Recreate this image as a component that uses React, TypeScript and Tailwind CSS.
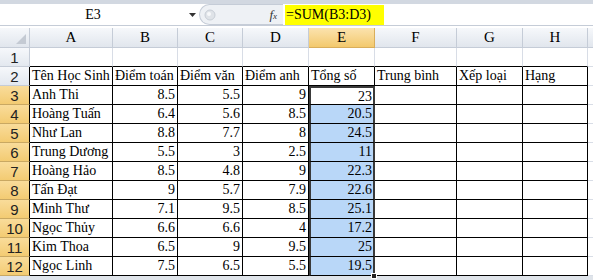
import React from "react";

const cols = ["A", "B", "C", "D", "E", "F", "G", "H"];

const rows: (string | number)[][] = [
  ["Anh Thi", 8.5, 5.5, 9, 23],
  ["Hoàng Tuấn", 6.4, 5.6, 8.5, 20.5],
  ["Như Lan", 8.8, 7.7, 8, 24.5],
  ["Trung Dương", 5.5, 3, 2.5, 11],
  ["Hoàng Hảo", 8.5, 4.8, 9, 22.3],
  ["Tấn Đạt", 9, 5.7, 7.9, 22.6],
  ["Minh Thư", 7.1, 9.5, 8.5, 25.1],
  ["Ngọc Thủy", 6.6, 6.6, 4, 17.2],
  ["Kim Thoa", 6.5, 9, 9.5, 25],
  ["Ngọc Linh", 7.5, 6.5, 5.5, 19.5],
];

const headers = ["Tên Học Sinh", "Điểm toán", "Điểm văn", "Điểm anh", "Tổng số", "Trung bình", "Xếp loại", "Hạng"];

const grid =
  "grid grid-cols-[30px_83px_65px_65px_66px_66px_82px_66px_65px_1fr]";

function RowHead({ n, selected }: { n: number; selected?: boolean }) {
  return (
    <div
      className={`h-[19px] border-r border-b flex items-center justify-center text-[15px] leading-none text-[#222] ${
        selected
          ? "bg-gradient-to-b from-[#f9dc9a] to-[#f3cb72] border-r-[#000] border-b-[#c9a862]"
          : n === 2
          ? "bg-gradient-to-b from-[#f6f8fb] to-[#e3e8ef] border-r-[#000] border-b-[#c5ccd7]"
          : "bg-gradient-to-b from-[#f6f8fb] to-[#e3e8ef] border-r-[#c5ccd7] border-b-[#c5ccd7]"
      }`}
      style={{ fontFamily: "'Liberation Sans', Arial, sans-serif" }}
    >
      {n}
    </div>
  );
}

export default function App() {
  return (
    <div
      className="w-[593px] h-[280px] overflow-hidden bg-white text-black"
      style={{ fontFamily: "'Liberation Serif', 'Times New Roman', serif" }}
    >
      {/* formula bar */}
      <div className="h-[4px] bg-[#d2d8e1]" />
      <div className="h-[22px] flex items-stretch border-b border-[#c5ccd7]">
        <div className="w-[186px] flex items-center justify-center text-[14px]">E3</div>
        <div className="w-[13px] flex items-center justify-center">
          <svg width="7" height="4" viewBox="0 0 7 4">
            <path d="M0 0h7L3.5 4z" fill="#333" />
          </svg>
        </div>
        <div className="w-[84px] bg-[#eef1f5] rounded-l-full border border-[#c5ccd7] border-r-0 flex items-center justify-between pl-[4px] pr-[6px]">
          <svg width="12" height="12" viewBox="0 0 12 12">
            <circle cx="6" cy="6" r="5" fill="#dfe3e8" stroke="#c8ced6" />
            <circle cx="5" cy="5" r="2" fill="#f7f8fa" />
          </svg>
          <span className="italic text-[13px] leading-none text-[#333]">
            f<span className="text-[9px]">x</span>
          </span>
        </div>
        <div className="flex-1 flex items-center pl-[2px]">
          <span className="bg-[#ffff00] text-[14px] leading-[20px] px-[1px] w-[99px]">=SUM(B3:D3)</span>
        </div>
      </div>
      <div className="h-[2px]" />

      {/* column headers */}
      <div className={grid}>
        <div className="h-[20px] bg-gradient-to-b from-[#f6f8fb] to-[#e1e6ed] border-r border-b border-[#c5ccd7] relative">
          <svg className="absolute right-[3px] bottom-[3px]" width="10" height="10" viewBox="0 0 10 10">
            <path d="M10 0v10H0z" fill="#c4cad3" />
          </svg>
        </div>
        {cols.map((c) => (
          <div
            key={c}
            className={`h-[20px] border-r border-b flex items-center justify-center text-[15px] ${
              c === "E"
                ? "bg-gradient-to-b from-[#fbe3ae] to-[#f3c96c] border-[#d9ae5b]"
                : "bg-gradient-to-b from-[#f6f8fb] to-[#e1e6ed] border-[#c5ccd7]"
            }`}
          >
            {c}
          </div>
        ))}
        <div className="h-[20px] bg-gradient-to-b from-[#f6f8fb] to-[#e1e6ed] border-b border-[#c5ccd7]" />

        {/* row 1 */}
        <RowHead n={1} />
        {cols.map((c) => (
          <div key={c} className="h-[19px] border-r border-r-[#d8dde6] border-b border-b-black" />
        ))}
        <div className="h-[19px] border-b border-[#d8dde6]" />

        {/* row 2 */}
        <RowHead n={2} />
        {headers.map((h, i) => (
          <div
            key={i}
            className="h-[19px] border-r border-b border-black text-[14px] leading-[18px] pl-[2px] whitespace-nowrap overflow-hidden"
          >
            {h}
          </div>
        ))}
        <div className="h-[19px] border-b border-[#d8dde6]" />

        {/* data rows */}
        {rows.map((r, ri) => (
          <React.Fragment key={ri}>
            <RowHead n={ri + 3} selected />
            <div className="h-[19px] border-r border-b border-black text-[14px] leading-[18px] pl-[2px] whitespace-nowrap">
              {r[0]}
            </div>
            {[1, 2, 3].map((ci) => (
              <div
                key={ci}
                className="h-[19px] border-r border-b border-black text-[14px] leading-[18px] pr-[2px] text-right"
              >
                {r[ci]}
              </div>
            ))}
            <div
              className={`h-[19px] border-x-2 border-b border-x-[#3a3a3a] border-b-black text-[14px] leading-[18px] pr-[1px] text-right relative ${
                ri === 0 ? "bg-white border-t-2 border-t-[#3a3a3a] leading-[16px]" : "bg-[#b9d7f8]"
              }`}
            >
              {r[4]}
              {ri === rows.length - 1 && (
                <span className="absolute right-[-4px] bottom-[-4px] w-[6px] h-[6px] bg-[#222] border border-white" />
              )}
            </div>
            {[0, 1, 2].map((k) => (
              <div key={k} className="h-[19px] border-r border-b border-black" />
            ))}
            <div className="h-[19px] border-b border-[#d8dde6]" />
          </React.Fragment>
        ))}
      </div>
      <div className="h-[10px] bg-[#dfe4ea]" />
    </div>
  );
}
